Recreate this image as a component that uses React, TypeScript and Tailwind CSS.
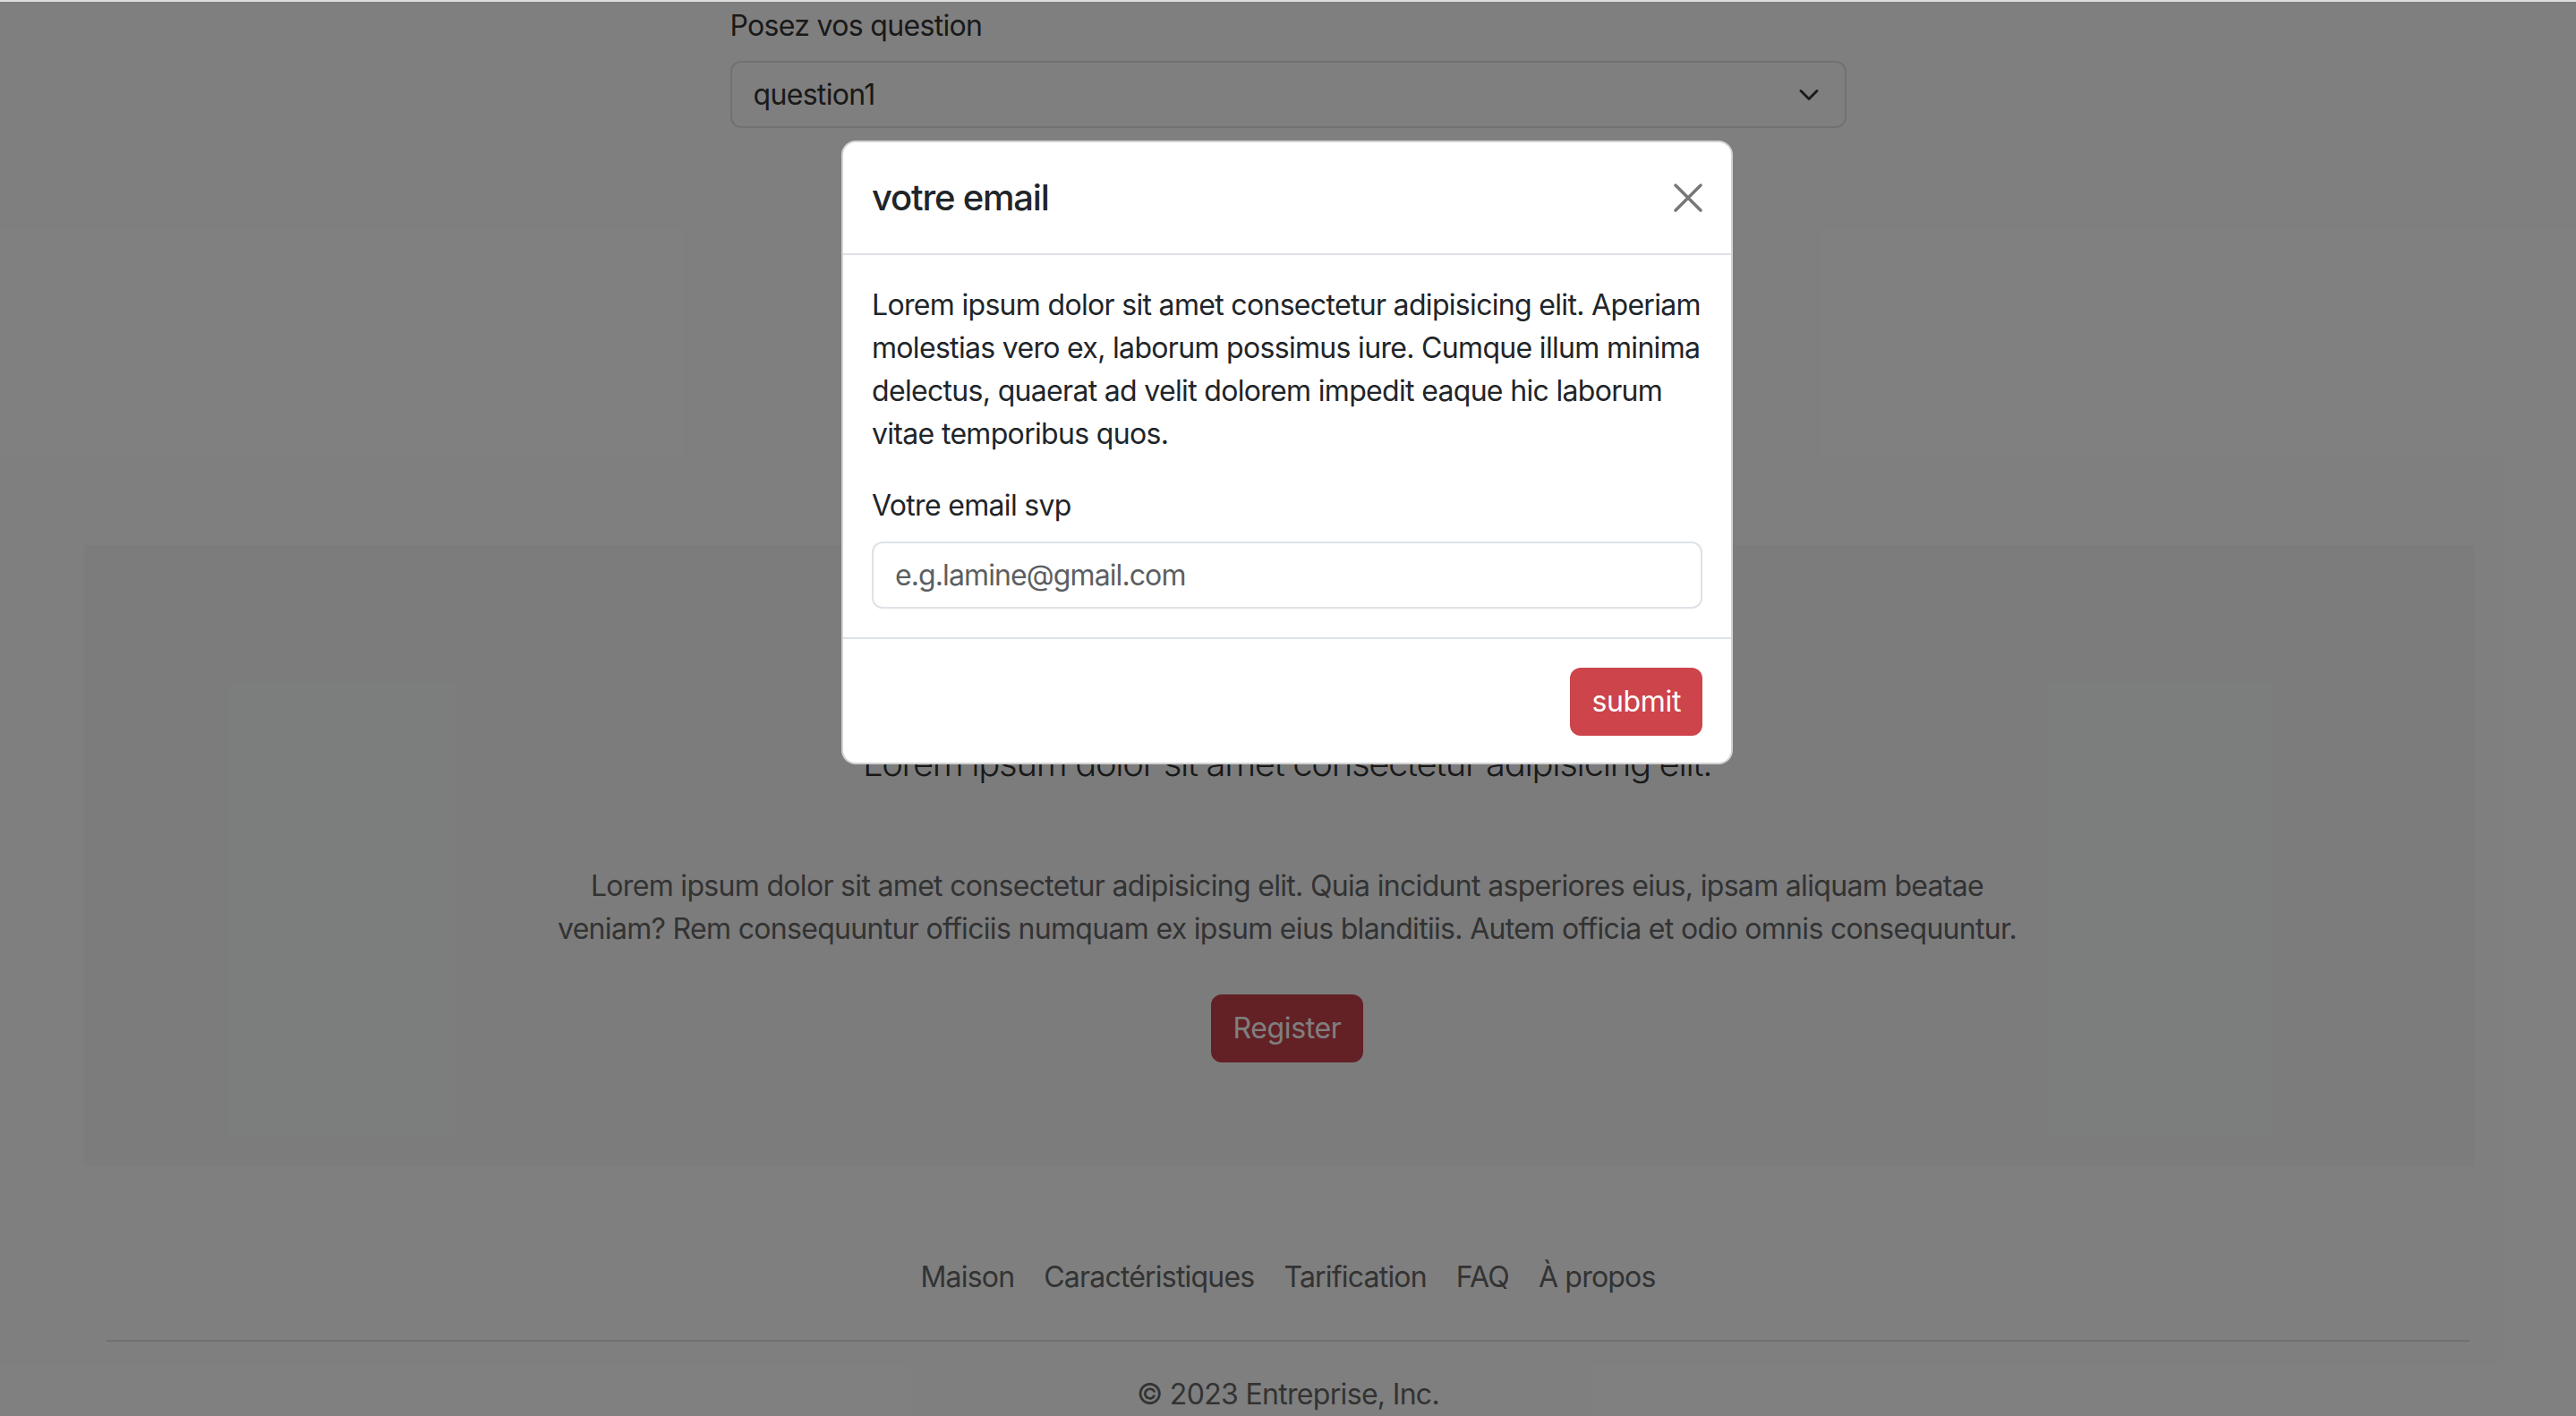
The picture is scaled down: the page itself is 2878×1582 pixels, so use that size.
export default function App() {
  return (
    <div className="relative h-[1582px] w-[2878px] overflow-hidden bg-white font-[Inter,sans-serif] tracking-[-0.68px] text-[#212529]">
      <div className="h-[2px] bg-[#dedede]" />
      <div className="relative h-[1580px]">
        <div className="mx-auto w-[1247px] pt-[3px]">
          <label className="mb-[15px] block text-[32px] leading-[48px] text-[#333]">Posez vos question</label>
          <div className="flex h-[75px] items-center justify-between rounded-[12px] border-2 border-[#dee2e6] pl-[24px] pr-[24px] text-[32px] leading-[48px] text-[#333]">
            <span>question1</span>
            <svg width="32" height="24" viewBox="0 0 16 16" fill="none">
              <path d="m2 5 6 6 6-6" stroke="#343a40" strokeWidth="2" strokeLinecap="round" strokeLinejoin="round" />
            </svg>
          </div>
        </div>

        <section className="ml-[94px] mt-[466px] h-[694px] w-[2671px] bg-[#f8f9fa] pl-[17px] pt-[214px] text-center">
          <p className="text-[40px] font-light leading-[60px] tracking-[-1.32px] text-[#333]">
            Lorem ipsum dolor sit amet consectetur adipisicing elit.
          </p>
          <p className="mt-[83px] whitespace-nowrap text-[32px] leading-[48px] text-[#666]">
            <span className="block">
              Lorem ipsum dolor sit amet consectetur adipisicing elit. Quia incidunt asperiores eius, ipsam aliquam beatae
            </span>
            <span className="block">
              veniam? Rem consequuntur officiis numquam ex ipsum eius blanditiis. Autem officia et odio omnis consequuntur.
            </span>
          </p>
          <button className="mt-[49px] h-[76px] rounded-[12px] bg-[#c6424a] px-[24px] text-[32px] leading-[48px] tracking-[-0.35px] text-white">
            Register
          </button>
        </section>

        <footer className="mx-auto mt-[100px] w-[2640px]">
          <nav className="flex justify-center gap-[33px] border-b-2 border-[#dee2e6] pb-[46px] text-[32px] leading-[48px] tracking-[-0.8px] text-[#666]">
            <a>Maison</a>
            <a>Caractéristiques</a>
            <a>Tarification</a>
            <a>FAQ</a>
            <a>À propos</a>
          </nav>
          <p className="mt-[35px] text-center text-[32px] leading-[48px] text-[#666]">© 2023 Entreprise, Inc.</p>
        </footer>

        <div className="absolute inset-0 bg-black/50" />
      </div>

      <div className="absolute left-[940px] top-[157px] w-[996px] rounded-[16px] border-2 border-black/[0.175] bg-white">
        <div className="flex items-center justify-between border-b-2 border-[#dee2e6] p-[32px]">
          <h5 className="text-[40px] font-medium leading-[60px] tracking-[-1.2px] text-[#212529]">votre email</h5>
          <button className="flex h-[32px] w-[32px] items-center justify-center">
            <svg width="32" height="32" viewBox="0 0 32 32" fill="none">
              <path d="M2 2 30 30M30 2 2 30" stroke="#777" strokeWidth="3.5" strokeLinecap="round" />
            </svg>
          </button>
        </div>
        <div className="p-[32px]">
          <p className="mb-[32px] whitespace-nowrap text-[32px] leading-[48px] text-[#212529]">
            <span className="block">Lorem ipsum dolor sit amet consectetur adipisicing elit. Aperiam</span>
            <span className="block">molestias vero ex, laborum possimus iure. Cumque illum minima</span>
            <span className="block">delectus, quaerat ad velit dolorem impedit eaque hic laborum</span>
            <span className="block">vitae temporibus quos.</span>
          </p>
          <label className="mb-[16px] block text-[32px] leading-[48px] text-[#212529]">Votre email svp</label>
          <input
            type="email"
            placeholder="e.g.lamine@gmail.com"
            className="block h-[75px] w-full rounded-[12px] border-2 border-[#dee2e6] bg-white px-[24px] text-[32px] leading-[48px] tracking-[-0.9px] text-[#212529] outline-none placeholder:text-[#5c5f63]"
          />
        </div>
        <div className="flex justify-end border-t-2 border-[#dee2e6] px-[32px] pb-[30px] pt-[32px]">
          <button className="h-[76px] rounded-[12px] bg-[#cd444b] px-[24px] text-[32px] leading-[48px] tracking-[-0.35px] text-white">submit</button>
        </div>
      </div>
    </div>
  );
}
